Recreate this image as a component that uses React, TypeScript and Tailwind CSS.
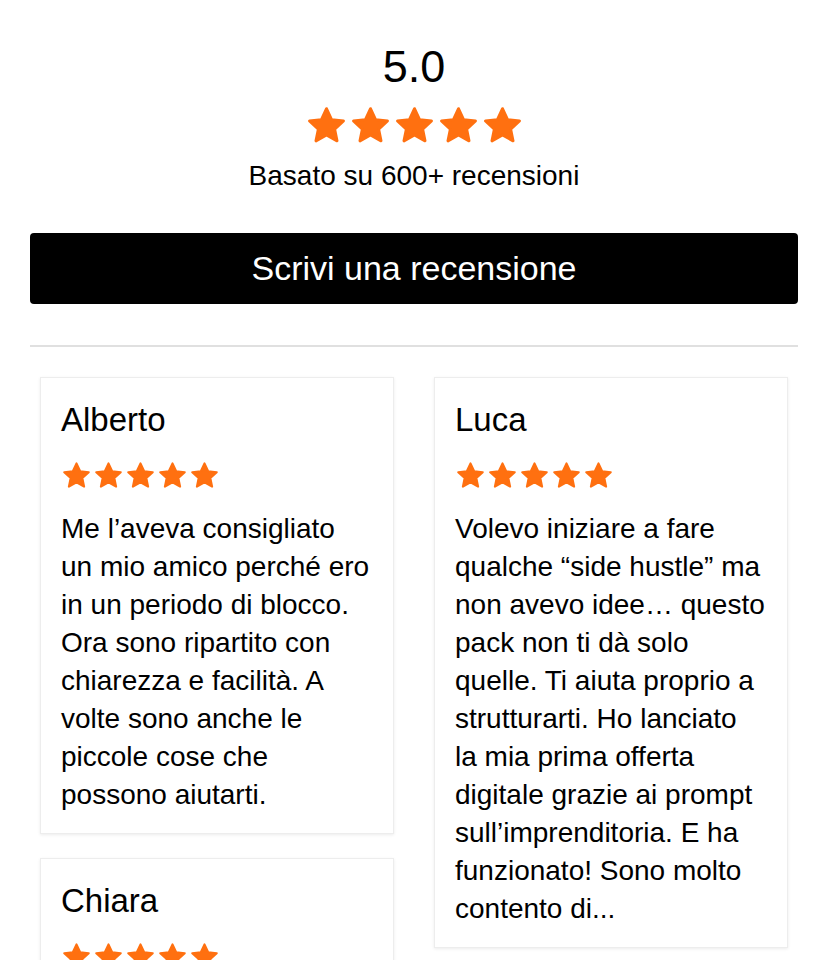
import React from "react";

const ORANGE = "#ff7010";

function Star({ size }: { size: number }) {
  return (
    <svg width={size} height={size} viewBox="0 0 24 24" className="shrink-0">
      <path
        d="M12 2.6l2.85 6.1 6.65.75-4.95 4.55 1.35 6.6L12 17.3l-5.9 3.3 1.35-6.6L2.5 9.45l6.65-.75z"
        fill={ORANGE}
        stroke={ORANGE}
        strokeWidth={1.6}
        strokeLinejoin="round"
      />
    </svg>
  );
}

function Card({ name, text }: { name: string; text?: string }) {
  return (
    <div className="bg-white border border-[#ededed] shadow-[0_1px_3px_rgba(0,0,0,0.08)] pl-[20px] pr-[22px] pt-[23px] pb-[19px]">
      <div className="text-[33px] leading-[38px] text-black">{name}</div>
      <div className="mt-[21px] flex gap-[1px]">
        {[0, 1, 2, 3, 4].map((i) => (
          <Star key={i} size={31} />
        ))}
      </div>
      {text && <p className="mt-[19px] text-[28px] leading-[38px] text-black">{text}</p>}
    </div>
  );
}

export default function App() {
  return (
    <div
      className="min-h-[960px] bg-white px-[30px] pt-[40px]"
      style={{ fontFamily: '"Liberation Sans", Arial, sans-serif' }}
    >
      <div className="flex flex-col items-center">
        <div className="text-[45px] leading-[54px] text-black">5.0</div>
        <div className="mt-[10px] flex gap-[1px]">
          {[0, 1, 2, 3, 4].map((i) => (
            <Star key={i} size={43} />
          ))}
        </div>
        <div className="mt-[13px] text-[28px] leading-[32px] text-black">Basato su 600+ recensioni</div>
      </div>
      <button className="mt-[41px] w-full h-[71px] rounded-[4px] bg-black text-white text-[34px] flex items-center justify-center">
        Scrivi una recensione
      </button>
      <div className="mt-[41px] h-[2px] bg-[#e0e0e0]" />
      <div className="mt-[30px] px-[10px] grid grid-cols-2 gap-x-[40px] items-start">
        <div className="flex flex-col gap-[24px]">
          <Card
            name="Alberto"
            text="Me l’aveva consigliato un mio amico perché ero in un periodo di blocco. Ora sono ripartito con chiarezza e facilità. A volte sono anche le piccole cose che possono aiutarti."
          />
          <Card name="Chiara" />
        </div>
        <div className="flex flex-col gap-[24px]">
          <Card
            name="Luca"
            text="Volevo iniziare a fare qualche “side hustle” ma non avevo idee… questo pack non ti dà solo quelle. Ti aiuta proprio a strutturarti. Ho lanciato la mia prima offerta digitale grazie ai prompt sull’imprenditoria. E ha funzionato! Sono molto contento di..."
          />
        </div>
      </div>
    </div>
  );
}
